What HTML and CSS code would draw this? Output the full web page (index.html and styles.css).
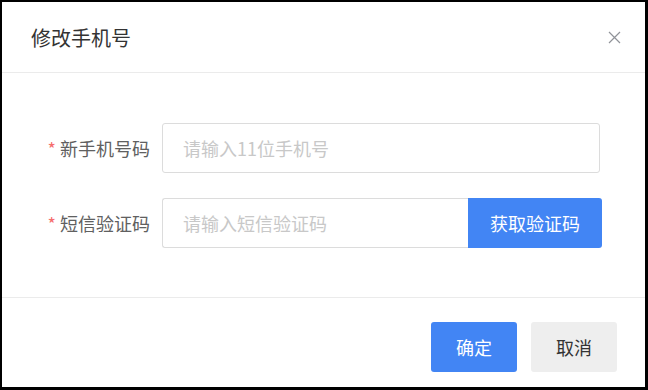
FILE: index.html
```html
<!DOCTYPE html>
<html lang="zh-CN">
<head>
  <meta charset="UTF-8" />
  <meta name="viewport" content="width=device-width, initial-scale=1" />
  <title>修改手机号</title>
  <link rel="stylesheet" href="styles.css">
</head>
<body>
  <div class="dialog">
    <div class="dialog-header">
      <span class="dialog-title">修改手机号</span>
      <button class="close-btn" aria-label="关闭">
        <svg width="13" height="13" viewBox="0 0 13 13">
          <path d="M1 1 L12 12 M12 1 L1 12" stroke="#909399" stroke-width="1.2" fill="none" />
        </svg>
      </button>
    </div>

    <div class="dialog-body">
      <div class="form-row">
        <label class="form-label"><span class="star">*</span>新手机号码</label>
        <input class="form-input" type="text" placeholder="请输入11位手机号">
      </div>
      <div class="form-row">
        <label class="form-label"><span class="star">*</span>短信验证码</label>
        <div class="input-group">
          <input class="form-input code-input" type="text" placeholder="请输入短信验证码">
          <button class="code-btn">获取验证码</button>
        </div>
      </div>
    </div>

    <div class="dialog-footer">
      <button class="btn btn-primary">确定</button>
      <button class="btn btn-default">取消</button>
    </div>
  </div>
</body>
</html>
```

FILE: styles.css
```css
* {
  box-sizing: border-box;
}

html, body {
  height: 100%;
}

body {
  margin: 0;
  background: #000;
  font-family: "Noto Sans CJK SC", "Noto Sans", sans-serif;
  color: #333;
  padding: 2px 3px 3px 2px;
}

.dialog {
  background: #fff;
  height: 100%;
  display: flex;
  flex-direction: column;
}

.dialog-header {
  height: 71px;
  border-bottom: 1px solid #ebebeb;
  display: flex;
  align-items: center;
  justify-content: space-between;
  padding: 0 24px 0 29px;
}

.dialog-title {
  font-size: 20px;
  color: #333;
}

.close-btn {
  background: none;
  border: none;
  padding: 0;
  width: 13px;
  height: 13px;
  display: flex;
  cursor: pointer;
}

.dialog-body {
  flex: 1;
  padding: 50px 0 0;
  display: flex;
  flex-direction: column;
  gap: 25px;
  border-bottom: 1px solid #ebebeb;
}

.form-row {
  display: flex;
  align-items: center;
}

.form-label {
  width: 160px;
  padding-right: 12px;
  text-align: right;
  font-size: 18px;
  color: #606060;
}

.star {
  color: #f56c6c;
  margin-right: 4px;
}

.form-input {
  width: 438px;
  height: 50px;
  border: 1px solid #dcdcdc;
  border-radius: 3px;
  padding: 0 20px;
  font-size: 18px;
  font-family: inherit;
  color: #333;
  outline: none;
}

.form-input::placeholder {
  color: #c8c8c8;
}

.input-group {
  display: flex;
}

.code-input {
  width: 306px;
  border-right: none;
  border-radius: 3px 0 0 3px;
}

.code-btn {
  width: 134px;
  height: 50px;
  border: none;
  border-radius: 0 3px 3px 0;
  background: #4285f4;
  color: #fff;
  font-size: 18px;
  font-family: inherit;
  cursor: pointer;
}

.dialog-footer {
  display: flex;
  justify-content: flex-end;
  gap: 14px;
  padding: 24px 28px 15px;
}

.btn {
  width: 86px;
  height: 50px;
  border: none;
  border-radius: 3px;
  font-size: 18px;
  font-family: inherit;
  cursor: pointer;
}

.btn-primary {
  background: #4285f4;
  color: #fff;
}

.btn-default {
  background: #eeeeee;
  color: #333;
}
```
